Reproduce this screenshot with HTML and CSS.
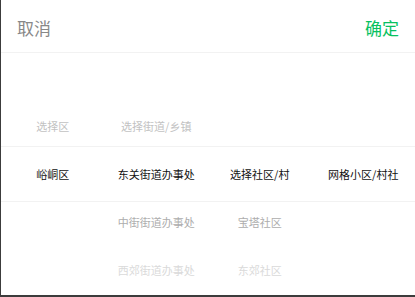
FILE: index.html
```html
<!DOCTYPE html>
<html>
<head>
    <title>选择地区</title>
    <link rel="stylesheet" href="styles.css">
</head>
<body>
    <div class="popup">
        <div class="toolbar">
            <span class="cancel">取消</span>
            <span class="confirm">确定</span>
        </div>
        <div class="picker">
            <div class="indicator"></div>
            <!-- row 1: empty -->
            <div></div><div></div><div></div><div></div>
            <!-- row 2 -->
            <div class="item above">选择区</div>
            <div class="item above">选择街道/乡镇</div>
            <div></div><div></div>
            <!-- row 3: selected -->
            <div class="item active">峪峒区</div>
            <div class="item active">东关街道办事处</div>
            <div class="item active">选择社区/村</div>
            <div class="item active">网格小区/村社</div>
            <!-- row 4 -->
            <div></div>
            <div class="item below">中街街道办事处</div>
            <div class="item below">宝塔社区</div>
            <div></div>
            <!-- row 5 -->
            <div></div>
            <div class="item far">西郊街道办事处</div>
            <div class="item far">东郊社区</div>
            <div></div>
        </div>
    </div>
</body>
</html>
```

FILE: styles.css
```css
body {
    margin: 0;
    padding: 0;
    background-color: #3c3c3c;
    font-family: "Noto Sans CJK SC", "Liberation Sans", sans-serif;
}
.popup {
    margin-left: 1px;
    height: 295px;
    background-color: #fff;
    overflow: hidden;
}
.toolbar {
    height: 53px;
    display: flex;
    align-items: center;
    justify-content: space-between;
    padding: 2px 16px 0 16px;
    box-sizing: border-box;
    border-bottom: 1px solid #f2f2f2;
    font-size: 17px;
}
.cancel {
    color: #888;
}
.confirm {
    color: #07c160;
}
.picker {
    position: relative;
    display: grid;
    grid-template-columns: repeat(4, 1fr);
    grid-auto-rows: 48px;
    padding-top: 1px;
}
.item {
    display: flex;
    align-items: center;
    justify-content: center;
    font-size: 11px;
    white-space: nowrap;
}
.item.active {
    color: #111;
}
.item.above {
    color: #c2c2c2;
}
.item.below {
    color: #adadad;
}
.item.far {
    color: #dadada;
}
/* selection band */
.indicator {
    position: absolute;
    left: 0;
    right: 0;
    top: 93px;
    height: 54px;
    border-top: 1px solid #f2f2f2;
    border-bottom: 1px solid #f2f2f2;
}
```
